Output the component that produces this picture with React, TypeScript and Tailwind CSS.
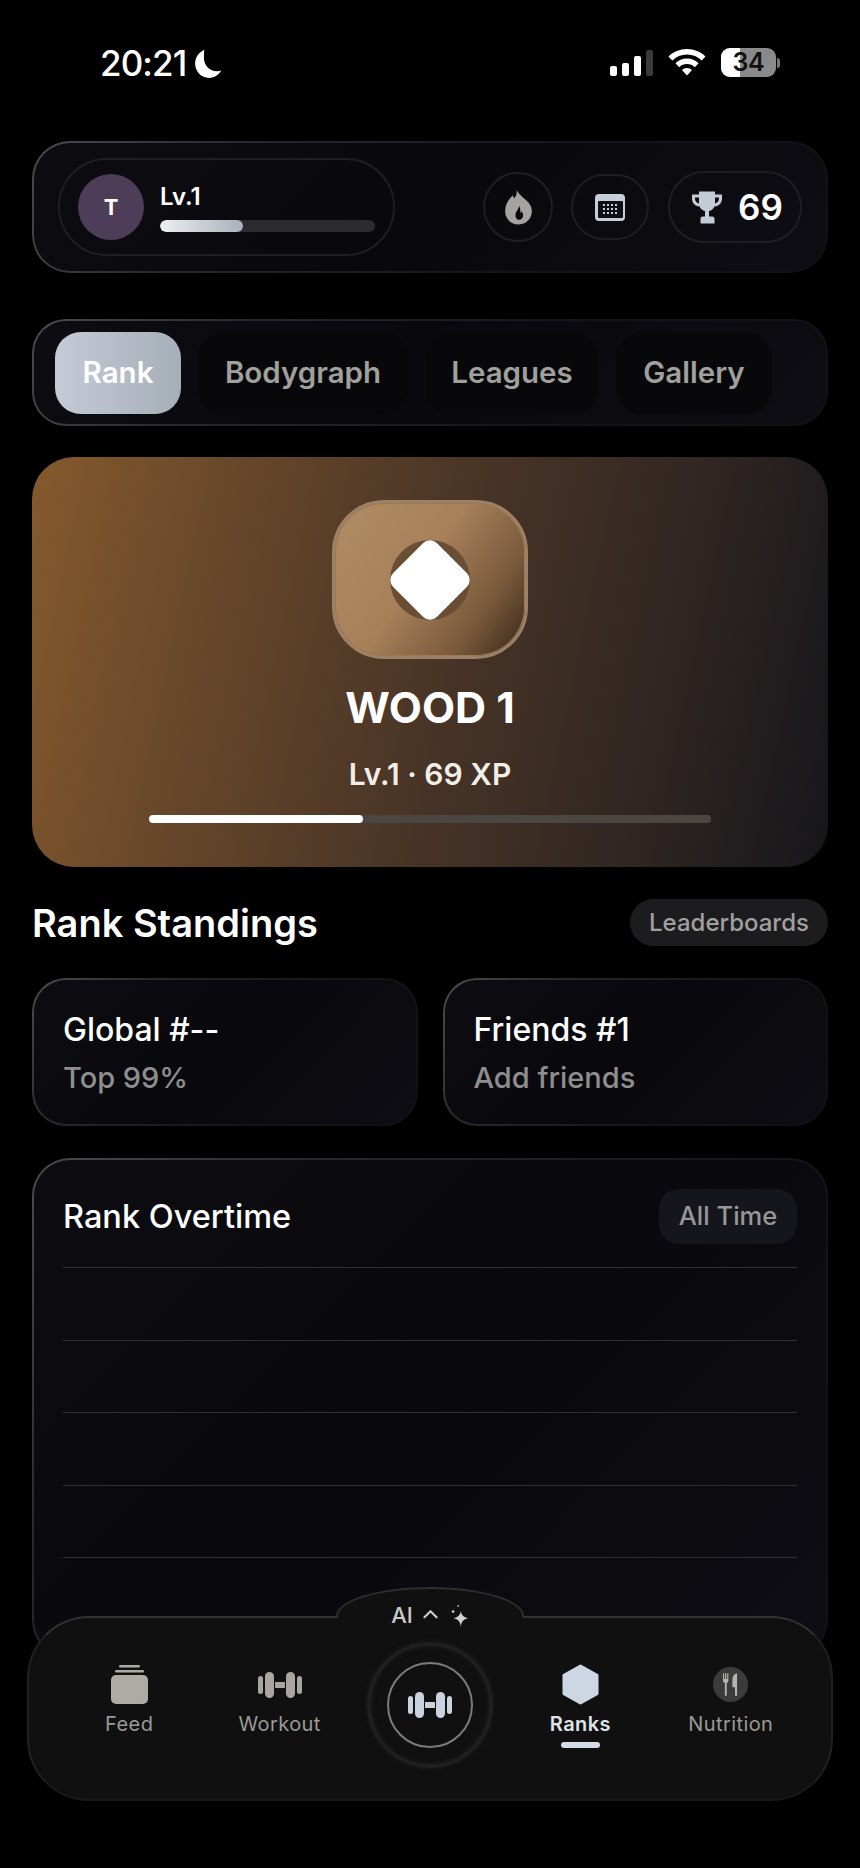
import React from "react";

const cardFrame =
  "border-2 border-transparent [background:linear-gradient(135deg,#0c0c11,#09090d_50%,#0d0d13)_padding-box,linear-gradient(125deg,#4c4c50,#28282c_25%,#151519_65%,#111115)_border-box]";

function Dumbbell({ className, fill, w = 44 }: { className?: string; fill: string; w?: number }) {
  return (
    <svg viewBox="0 0 44 26" width={w} height={(w * 26) / 44} className={className} fill={fill}>
      <rect x="0" y="4" width="5" height="18" rx="2.5" />
      <rect x="7" y="0" width="9" height="26" rx="4.5" />
      <rect x="17" y="10" width="10" height="6" rx="0.5" />
      <rect x="28" y="0" width="9" height="26" rx="4.5" />
      <rect x="39" y="4" width="5" height="18" rx="2.5" />
    </svg>
  );
}

function StatusBar() {
  return (
    <div className="h-[141px] -mx-8 pl-[100px] pt-[49px] pr-[80px] flex justify-between items-start text-white">
      <div className="flex items-center h-[28px] gap-[6px]">
        <span className="text-[35px] font-medium tracking-[-0.9px] leading-none">20:21</span>
        <svg viewBox="0 0 28 28" width="31" height="31" fill="#fff">
          <path d="M11 1.500C6 4 2.800 8.600 2.800 14c0 7.200 5.600 13 12.600 13 4.800 0 8.900-2.600 11-6.600-1.100.4-2.400.6-3.700.6C16 21 10.800 15.700 10.800 9c0-2.700.1-5.200.2-7.500z" />
        </svg>
      </div>
      <div className="flex items-start">
        <div className="flex items-end gap-[5px] h-[27px]">
          <div className="w-[7px] h-[10px] rounded-[2px] bg-white" />
          <div className="w-[7px] h-[13px] rounded-[2px] bg-white" />
          <div className="w-[7px] h-[20px] rounded-[2px] bg-white" />
          <div className="w-[7px] h-[26px] rounded-[2px] bg-[#3a3a3a]" />
        </div>
        <svg viewBox="0 0 38 27" width="38" height="27" className="ml-[15px]" fill="#fff">
          <path d="M19 0C11.800 0 5.300 2.800.5 7.400l3.800 4C8.100 7.700 13.300 5.500 19 5.500s10.900 2.200 14.700 5.900l3.800-4C32.700 2.800 26.200 0 19 0z" />
          <path d="M19 9.600c-4.500 0-8.600 1.800-11.600 4.700l3.800 4c2-2 4.800-3.200 7.800-3.200s5.800 1.200 7.800 3.200l3.800-4c-3-2.900-7.100-4.700-11.600-4.700z" />
          <path d="M19 19c-2 0-3.800.8-5 2l5 5.600 5-5.600c-1.200-1.200-3-2-5-2z" />
        </svg>
        <div className="relative ml-[15px] w-[55px] h-[29px] rounded-[9px] overflow-hidden bg-[#8a8a8a] -mt-[1px]">
          <div className="absolute left-0 top-0 bottom-0 w-[19px] bg-white" />
          <div className="absolute inset-0 flex items-center justify-center text-[25px] font-semibold text-[#111] leading-none tracking-[-0.3px]">34</div>
        </div>
        <div className="w-[3px] h-[10px] mt-[9px] ml-[1px] rounded-r-full bg-[#777]" />
      </div>
    </div>
  );
}

function Header() {
  return (
    <div className={`h-[132px] rounded-[38px] flex items-center pl-[24px] pr-[24px] ${cardFrame}`}>
      <div className="w-[337px] h-[98px] rounded-[49px] border-2 border-[#1f1f23] flex items-center pl-[18px]">
        <div className="w-[66px] h-[66px] rounded-full bg-[#4d3d58] flex items-center justify-center text-white text-[22px] font-bold">T</div>
        <div className="ml-[16px] w-[215px]">
          <div className="text-[24px] font-semibold text-white leading-none mt-[2px] mb-[11px]">Lv.1</div>
          <div className="h-[12px] rounded-full bg-[#2b2b30] overflow-hidden">
            <div className="h-full w-[83px] rounded-full bg-gradient-to-r from-[#eeeff0] to-[#a9b1bb]" />
          </div>
        </div>
      </div>
      <div className="ml-auto flex items-center">
        <div className="w-[70px] h-[70px] rounded-full border-2 border-[#1f1f23] flex items-center justify-center">
          <svg viewBox="0 0 26 34" width="27" height="35">
            <path fill="#a5a39f" d="M11 0c1 4-1 6-2 8-1-1-1.500-2-1.500-3C3.500 9 0 14 0 20.500 0 28 5.500 33.500 13 33.500S26 28 26 20.500C26 11 16.500 9 11 0z" />
            <path fill="#08080c" d="M13.500 15c.5 3-3.500 5.500-3.500 9.500 0 2.500 1.500 4.500 3.500 4.500s4-2 4-4.500c0-1.500-.8-3-1.500-3.800-.2 1-.6 1.500-1.200 1.800.3-2.500-.3-5.500-1.300-7.500z" />
          </svg>
        </div>
        <div className="ml-[18px] w-[78px] h-[66px] rounded-[33px] border-2 border-[#1f1f23] flex items-center justify-center">
          <div className="w-[30px] h-[27px] rounded-[4px] bg-[#c6ced9] pt-[7px] px-[2.500px] pb-[2.500px]">
            <div className="w-full h-full rounded-[1px] bg-[#0d0f15] flex items-center justify-center">
              <div className="grid grid-cols-4 gap-[2px]">
                {Array.from({ length: 12 }).map((_, i) => (
                  <div key={i} className="w-[2px] h-[2px] bg-[#c6ced9]" />
                ))}
              </div>
            </div>
          </div>
        </div>
        <div className="ml-[19px] w-[134px] h-[72px] rounded-[36px] border-2 border-[#1f1f23] flex items-center pl-[22px]">
          <svg viewBox="0 0 30 32" width="30" height="33" fill="#c3cbd6">
            <path d="M7 0h16v3h7v4c0 4.500-3 7.500-7.600 8-1 2.400-3 4-5.400 4.500V25h3.500c1 0 2 1 2 2v5H8.500v-5c0-1 1-2 2-2H13v-5.500c-2.400-.5-4.400-2.100-5.400-4.500C3 14.500 0 11.500 0 7V3h7V0zM3 6v1c0 2.500 1.500 4.500 4 5V6H3zm24 0h-4v6c2.500-.5 4-2.500 4-5V6z" fillRule="evenodd" />
          </svg>
          <span className="ml-[16px] text-[35px] font-semibold text-white leading-none">69</span>
        </div>
      </div>
    </div>
  );
}

function Tabs() {
  const other = "h-[82px] rounded-[26px] bg-[#08080b] flex items-center justify-center text-[#a0a09c] text-[29.5px] font-semibold";
  return (
    <div className={`mt-[46px] h-[107px] rounded-[34px] flex items-center pl-[21px] ${cardFrame}`}>
      <div className="w-[126px] h-[82px] rounded-[26px] bg-gradient-to-r from-[#c4cbd6] to-[#a6aeb8] flex items-center justify-center text-white text-[29.5px] font-semibold">Rank</div>
      <div className={`ml-[17px] w-[210px] ${other}`}>Bodygraph</div>
      <div className={`ml-[18px] w-[172px] ${other}`}>Leagues</div>
      <div className={`ml-[18px] w-[156px] ${other}`}>Gallery</div>
    </div>
  );
}

function Hero() {
  return (
    <div className="mt-[31px] h-[410px] rounded-[42px] bg-[linear-gradient(102deg,#85592d_0%,#65462a_25%,#4a3526_50%,#2f2522_78%,#16161b_100%)] flex flex-col items-center pt-[43px]">
      <div className="w-[196px] h-[159px] rounded-[52px] border-[3px] border-[#9b8169] bg-[linear-gradient(125deg,#b08c65_0%,#a58059_45%,#7a5a3c_75%,#44301f_95%)] flex items-center justify-center shadow-[inset_0_0_0_1px_#a0784c]">
        <div className="relative w-[80px] h-[80px] flex items-center justify-center">
          <div className="absolute inset-0 rounded-full bg-[#6a4e34]" />
          <div className="relative w-[62px] h-[62px] rounded-[10px] bg-white rotate-45" />
        </div>
      </div>
      <div className="mt-[25px] text-[43px] font-bold text-white leading-[46px]">WOOD 1</div>
      <div className="mt-[27px] text-[30px] font-semibold text-[#f1eeea] leading-[34px]">Lv.1 · 69 XP</div>
      <div className="mt-[24px] w-[562px] h-[8px] rounded-full bg-[#4c4642]">
        <div className="h-full w-[214px] rounded-full bg-white" />
      </div>
    </div>
  );
}

function Standings() {
  return (
    <>
      <div className="mt-[32px] h-[47px] flex items-center justify-between">
        <div className="text-[38px] font-semibold text-white leading-none">Rank Standings</div>
        <div className="w-[198px] h-[47px] rounded-full bg-[#1c1c1e] flex items-center justify-center text-[24px] font-medium text-[#a0a0a0]">Leaderboards</div>
      </div>
      <div className="mt-[32px] grid grid-cols-2 gap-[25px]">
        {[
          ["Global #--", "Top 99%"],
          ["Friends #1", "Add friends"],
        ].map(([a, b]) => (
          <div key={a} className={`h-[148px] rounded-[34px] pl-[29px] pt-[30px] ${cardFrame}`}>
            <div className="text-[32px] font-medium text-white leading-[40px]">{a}</div>
            <div className="mt-[10px] text-[29px] font-medium text-[#8e8e8e] leading-[36px]">{b}</div>
          </div>
        ))}
      </div>
    </>
  );
}

function Chart() {
  return (
    <div className={`mt-[32px] h-[500px] rounded-[38px] px-[29px] pt-[30px] ${cardFrame}`}>
      <div className="flex items-center justify-between h-[55px] -mt-[1px]">
        <div className="text-[32.5px] font-medium text-white leading-none pt-[2px]">Rank Overtime</div>
        <div className="w-[138px] h-[55px] rounded-[20px] bg-[#15161b] flex items-center justify-center text-[25.5px] font-medium text-[#97979a]">All Time</div>
      </div>
      <div className="mt-[23px] flex flex-col gap-[71.500px]">
        {[0, 1, 2, 3, 4].map((i) => (
          <div key={i} className="h-px bg-[#303034]" />
        ))}
      </div>
    </div>
  );
}

function NavItem({ label, icon, active }: { label: string; icon: React.ReactNode; active?: boolean }) {
  return (
    <div className="flex flex-col items-center pt-[45px]">
      <div className="h-[43px] flex items-center justify-center">{icon}</div>
      <div className={`mt-[5px] text-[20px] leading-[26px] tracking-[0.4px] ${active ? "text-[#dfe3e8] font-semibold" : "text-[#9a9a97]"}`}>{label}</div>
      {active && <div className="mt-[5px] w-[39px] h-[6px] rounded-full bg-[#d3dbe6]" />}
    </div>
  );
}

function BottomNav() {
  return (
    <div className="absolute left-[27px] top-[1616px] w-[806px] h-[185px]">
      <div className="absolute left-[309px] -top-[29px] w-[188px] h-[31px] z-10 bg-[#101011] border-2 border-b-0 border-[#2e2e30] rounded-[94px_94px_0_0/29px_29px_0_0] flex items-start justify-center gap-[10px] pt-[14px]">
        <span className="text-[22px] font-medium text-[#c9c9c9] leading-[24px]">AI</span>
        <svg viewBox="0 0 16 10" width="15" height="10" className="mt-[6px]" fill="none" stroke="#cfcfcf" strokeWidth="2.200" strokeLinecap="round" strokeLinejoin="round">
          <path d="M1.500 8.500 8 2l6.500 6.500" />
        </svg>
        <svg viewBox="0 0 22 24" width="20" height="23" className="mt-[1px] ml-[1px]" fill="#cfd3d8">
          <path d="M13 7c.7 4.500 2.800 6.700 8 8-5.200 1.300-7.300 3.500-8 9-.7-5.500-2.800-7.700-8-9 5.200-1.300 7.300-3.500 8-8z" />
          <path d="M4.500 5c.3 1.500 1 2.300 2.500 2.600C5.500 8 4.800 8.700 4.500 10.200 4.200 8.700 3.500 8 2 7.600 3.500 7.300 4.200 6.500 4.500 5z" />
          <path d="M10 0c.2.900.6 1.300 1.500 1.500-.9.200-1.300.6-1.500 1.500-.2-.9-.6-1.300-1.500-1.500C9.400 1.300 9.800.9 10 0z" />
        </svg>
      </div>
      <div className="w-full h-full rounded-[62px] bg-[#101011] border-2 border-t-[#323234] border-x-[#202022] border-b-[#19191a] grid grid-cols-5 px-[25px]">
        <NavItem
          label="Feed"
          icon={
            <svg viewBox="0 0 37 39" width="37" height="39" fill="#aeaba4">
              <rect x="8" y="0" width="21" height="2.500" rx="1.200" />
              <rect x="4" y="5" width="29" height="2.500" rx="1.200" />
              <rect x="0" y="10" width="37" height="29" rx="5" />
            </svg>
          }
        />
        <NavItem label="Workout" icon={<Dumbbell fill="#a9a5a0" />} />
        <div className="flex justify-center pt-[24px]">
          <div className="w-[126px] h-[126px] rounded-full border-[4px] border-[#1f1f20] flex items-center justify-center shadow-[0_0_5px_#1d1d1e,inset_0_0_5px_#1d1d1e]">
            <div className="w-[86px] h-[86px] rounded-full border-2 border-[#7b7b7b] flex items-center justify-center">
              <Dumbbell fill="#c9d2de" w={44} />
            </div>
          </div>
        </div>
        <NavItem
          label="Ranks"
          active
          icon={
            <svg viewBox="0 0 38 42" width="37" height="41" fill="#cdd7e3" stroke="#cdd7e3" strokeWidth="3" strokeLinejoin="round">
              <path d="M19 2 36 11.500v19L19 40 2 30.500v-19z" />
            </svg>
          }
        />
        <NavItem
          label="Nutrition"
          icon={
            <div className="w-[35px] h-[35px] rounded-full bg-[#3b3b3b] flex items-center justify-center">
              <svg viewBox="0 0 16 24" width="15" height="23" fill="#b3b3b0">
                <path d="M0 0h1.200v6h1V0h1.300v6h1V0H5.700v8c0 1.200-.7 2-1.700 2.300V24H2V10.300C1 10 0 9.200 0 8z" />
                <path d="M15 0v24h-2.200v-9H10V7c0-4 2-6.500 5-7z" />
              </svg>
            </div>
          }
        />
      </div>
    </div>
  );
}

export default function App() {
  return (
    <div className="relative w-[860px] h-[1868px] overflow-hidden bg-black font-['Inter',sans-serif]">
      <div className="px-8">
        <StatusBar />
        <Header />
        <Tabs />
        <Hero />
        <Standings />
        <Chart />
      </div>
      <BottomNav />
    </div>
  );
}
